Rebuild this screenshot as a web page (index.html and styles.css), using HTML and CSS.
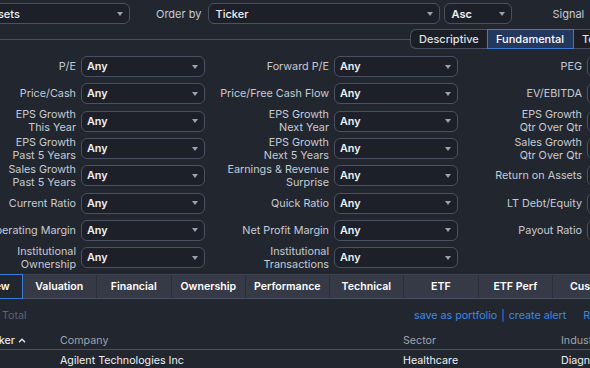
FILE: index.html
```html
<!DOCTYPE html>
<html>
<head>
<meta charset="utf-8">
<link rel="stylesheet" href="styles.css">
</head>
<body>
<div class="topbar">
  <div class="sel sel-preset"><span>My Presets</span><i class="caret"></i></div>
  <span class="top-lbl lbl-order">Order by</span>
  <div class="sel sel-order"><span>Ticker</span><i class="caret"></i></div>
  <div class="sel sel-dir"><span>Asc</span><i class="caret"></i></div>
  <span class="top-lbl lbl-signal">Signal</span>
  <div class="sel sel-signal"><span>None (all stocks)</span><i class="caret"></i></div>
</div>

<div class="ftabs">
  <div class="rule"></div>
  <div class="ftab ftab-first">Descriptive</div>
  <div class="ftab ftab-active">Fundamental</div>
  <div class="ftab">Technical</div>
</div>

<div class="filters">
  <div class="cell"><label>P/E</label><div class="sel"><span>Any</span><i class="caret"></i></div></div>
  <div class="cell"><label>Forward P/E</label><div class="sel"><span>Any</span><i class="caret"></i></div></div>
  <div class="cell"><label>PEG</label><div class="sel"><span>Any</span><i class="caret"></i></div></div>

  <div class="cell"><label>Price/Cash</label><div class="sel"><span>Any</span><i class="caret"></i></div></div>
  <div class="cell"><label>Price/Free Cash Flow</label><div class="sel"><span>Any</span><i class="caret"></i></div></div>
  <div class="cell"><label>EV/EBITDA</label><div class="sel"><span>Any</span><i class="caret"></i></div></div>

  <div class="cell"><label>EPS Growth<br>This Year</label><div class="sel"><span>Any</span><i class="caret"></i></div></div>
  <div class="cell"><label>EPS Growth<br>Next Year</label><div class="sel"><span>Any</span><i class="caret"></i></div></div>
  <div class="cell"><label>EPS Growth<br>Qtr Over Qtr</label><div class="sel"><span>Any</span><i class="caret"></i></div></div>

  <div class="cell"><label>EPS Growth<br>Past 5 Years</label><div class="sel"><span>Any</span><i class="caret"></i></div></div>
  <div class="cell"><label>EPS Growth<br>Next 5 Years</label><div class="sel"><span>Any</span><i class="caret"></i></div></div>
  <div class="cell"><label>Sales Growth<br>Qtr Over Qtr</label><div class="sel"><span>Any</span><i class="caret"></i></div></div>

  <div class="cell"><label>Sales Growth<br>Past 5 Years</label><div class="sel"><span>Any</span><i class="caret"></i></div></div>
  <div class="cell"><label>Earnings &amp; Revenue<br>Surprise</label><div class="sel"><span>Any</span><i class="caret"></i></div></div>
  <div class="cell"><label>Return on Assets</label><div class="sel"><span>Any</span><i class="caret"></i></div></div>

  <div class="cell"><label>Current Ratio</label><div class="sel"><span>Any</span><i class="caret"></i></div></div>
  <div class="cell"><label>Quick Ratio</label><div class="sel"><span>Any</span><i class="caret"></i></div></div>
  <div class="cell"><label>LT Debt/Equity</label><div class="sel"><span>Any</span><i class="caret"></i></div></div>

  <div class="cell"><label>Operating Margin</label><div class="sel"><span>Any</span><i class="caret"></i></div></div>
  <div class="cell"><label>Net Profit Margin</label><div class="sel"><span>Any</span><i class="caret"></i></div></div>
  <div class="cell"><label>Payout Ratio</label><div class="sel"><span>Any</span><i class="caret"></i></div></div>

  <div class="cell"><label>Institutional<br>Ownership</label><div class="sel"><span>Any</span><i class="caret"></i></div></div>
  <div class="cell"><label>Institutional<br>Transactions</label><div class="sel"><span>Any</span><i class="caret"></i></div></div>
  <div class="cell"></div>
</div>

<div class="navtabs">
  <div class="ntab ntab-active">Overview</div>
  <div class="ntab">Valuation</div>
  <div class="ntab">Financial</div>
  <div class="ntab">Ownership</div>
  <div class="ntab">Performance</div>
  <div class="ntab">Technical</div>
  <div class="ntab">ETF</div>
  <div class="ntab">ETF Perf</div>
  <div class="ntab">Custom</div>
</div>

<div class="toolbar">
  <span class="total">Total</span>
  <a class="link">save as portfolio</a>
  <span class="divider">|</span>
  <a class="link">create alert</a>
  <a class="link reset">Reset</a>
</div>

<div class="table">
  <div class="row head">
    <div class="c c-ticker sorted">Ticker <svg class="chev" width="8" height="5" viewBox="0 0 8 5"><path d="M1 4.2 L4 1.2 L7 4.2" fill="none" stroke="currentColor" stroke-width="1.3"/></svg></div>
    <div class="c">Company</div>
    <div class="c">Sector</div>
    <div class="c">Industry</div>
  </div>
  <div class="row data">
    <div class="c c-ticker">A</div>
    <div class="c">Agilent Technologies Inc</div>
    <div class="c">Healthcare</div>
    <div class="c">Diagnostics &amp; Research</div>
  </div>
</div>
</body>
</html>
```

FILE: styles.css
```css
* { box-sizing: border-box; }
html, body { margin: 0; padding: 0; background: #22262f; }
body {
  width: 590px;
  height: 368px;
  overflow: hidden;
  font-family: Inter, "Noto Sans", sans-serif;
  font-size: 10.8px;
  color: #c7cbd5;
}

/* generic select */
.sel {
  height: 21px;
  border: 1px solid #4b5162;
  border-radius: 6px;
  background: #1d2028;
  display: flex;
  align-items: center;
  padding: 0 6px 0 5px;
  color: #eef0f4;
  font-weight: 600;
  flex-shrink: 0;
  white-space: nowrap;
}
.sel span { flex: 1; overflow: hidden; }
.caret {
  width: 0;
  height: 0;
  border-left: 3.5px solid transparent;
  border-right: 3.5px solid transparent;
  border-top: 4px solid #9ba1ae;
  margin-left: 6px;
  flex-shrink: 0;
}

/* top bar */
.topbar {
  display: flex;
  align-items: center;
  height: 26px;
  padding-top: 1px;
  white-space: nowrap;
  font-size: 11px;
}
.top-lbl { flex-shrink: 0; color: #c7cbd5; }
.sel-preset { width: 175px; margin-left: -45px; font-weight: 500; }
.lbl-order { margin-left: 26px; }
.sel-order { width: 232px; margin-left: 7px; font-weight: 500; padding-left: 6px; }
.sel-dir { width: 68px; margin-left: 4px; padding-left: 6px; }
.lbl-signal { margin-left: 40px; }
.sel-signal { width: 200px; margin-left: 7px; }

/* filter tabs */
.ftabs {
  display: flex;
  align-items: center;
  height: 20px;
  margin-top: 3px;
  font-size: 11px;
}
.rule { width: 410px; flex-shrink: 0; height: 1px; background: #4b5162; }
.ftab {
  height: 20px;
  display: flex;
  align-items: center;
  padding: 0 8px;
  flex-shrink: 0;
  color: #dfe2e9;
  background: #1b1e25;
  border: 1px solid #4b5162;
  border-left: none;
  font-weight: 500;
  white-space: nowrap;
}
.ftab-first {
  width: 77px;
  border-left: 1px solid #4b5162;
  border-right: none;
  border-radius: 6px 0 0 6px;
}
.ftab-active {
  width: 87px;
  background: #24375f;
  border: 1px solid #3d7bd2;
  color: #ffffff;
}

/* filter grid */
.filters {
  display: grid;
  grid-template-columns: repeat(3, 249px);
  column-gap: 4px;
  grid-auto-rows: 27.3px;
  margin: 4px 0 0 -44px;
}
.cell {
  display: flex;
  align-items: center;
  gap: 5px;
}
.cell label {
  width: 120px;
  flex-shrink: 0;
  text-align: right;
  line-height: 13px;
  white-space: nowrap;
}
.cell .sel { width: 124px; }

/* nav tabs */
.navtabs {
  display: flex;
  height: 25px;
  margin: 3px 0 0 -52px;
  border-top: 1px solid #3e4351;
  border-bottom: 1px solid #4b5162;
  white-space: nowrap;
}
.ntab {
  min-width: 74.5px;
  padding: 0 8px;
  flex-shrink: 0;
  display: flex;
  align-items: center;
  justify-content: center;
  background: #363a46;
  border-right: 1px solid #2a2e38;
  color: #ffffff;
  font-weight: 600;
  font-size: 10.6px;
}
.ntab-active {
  background: #22262f;
  border: 1px solid #3d7fd8;
  margin-top: -1px;
  margin-bottom: -1px;
}

/* toolbar */
.toolbar {
  display: flex;
  align-items: center;
  height: 33px;
  padding-left: 2px;
  white-space: nowrap;
  font-size: 10.7px;
}
.total { width: 412px; flex-shrink: 0; color: #5d6372; }
.link { color: #4088e2; flex-shrink: 0; }
.divider { color: #4088e2; margin: 0 4px; flex-shrink: 0; }
.reset { margin-left: 17px; }

/* table */
.table { margin-left: -21px; font-size: 10.7px; }
.row {
  display: grid;
  grid-template-columns: 77px 343px 158px 200px;
  white-space: nowrap;
}
.row .c { padding-left: 4px; overflow: hidden; }
.head { height: 18px; align-items: center; border-bottom: 1px solid #4b5162; color: #9ea3b0; }
.head .sorted { color: #e6e8ee; font-weight: 500; display: flex; align-items: center; gap: 3px; }
.chev { flex-shrink: 0; }
.data { height: 20px; align-items: center; color: #eef0f4; }
```
